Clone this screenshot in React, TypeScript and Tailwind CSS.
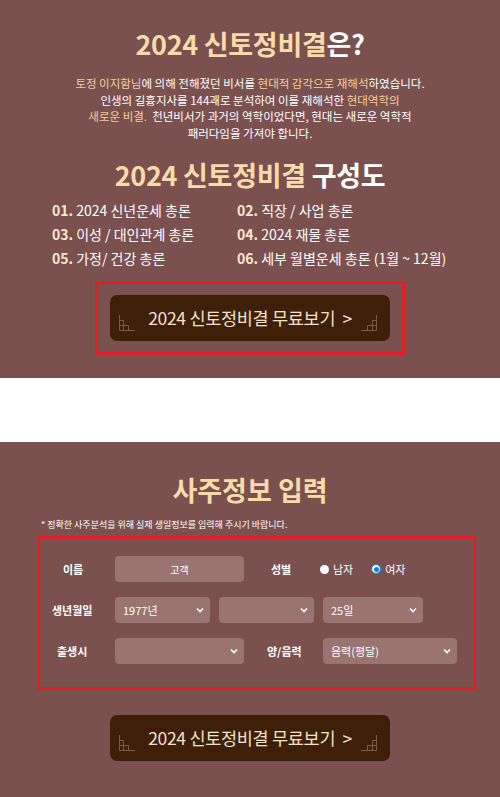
const font = { fontFamily: '"Noto Sans CJK KR", "Noto Sans", sans-serif' };

function Stairs({ flip }: { flip?: boolean }) {
  // small staircase grid in the button corners
  return (
    <svg
      width="18"
      height="17"
      viewBox="0 0 18 17"
      className={flip ? '-scale-x-100' : ''}
      fill="none"
      stroke="#7a5a44"
      strokeWidth="1"
    >
      <path d="M1.5 1v15.5H17" />
      <path d="M1.5 6.5h4v10M1.5 11.5h9v5M5.5 6.5v5M10.5 11.5v5" />
    </svg>
  );
}

function FreeButton() {
  return (
    <button
      className="relative flex h-[46px] w-[280px] items-center justify-center rounded-[7px] bg-[#3e1f08] text-[17.5px] tracking-[-0.3px] text-[#f3e2c8]"
      style={font}
    >
      <span className="absolute bottom-[10px] left-[8px]">
        <Stairs />
      </span>
      <span>2024 신토정비결 무료보기&nbsp; &gt;</span>
      <span className="absolute bottom-[10px] right-[12px]">
        <Stairs flip />
      </span>
    </button>
  );
}

const items = [
  ['01.', '2024 신년운세 총론'],
  ['02.', '직장 / 사업 총론'],
  ['03.', '이성 / 대인관계 총론'],
  ['04.', '2024 재물 총론'],
  ['05.', '가정/ 건강 총론'],
  ['06.', '세부 월별운세 총론 (1월 ~ 12월)'],
];

function Select({ value, className }: { value?: string; className: string }) {
  return (
    <div
      className={`flex h-[26px] items-center justify-between rounded-[4px] bg-[#997471] pl-[8px] pr-[6px] text-[11px] font-normal text-white ${className}`}
    >
      <span>{value ?? ''}</span>
      <svg width="8" height="6" viewBox="0 0 8 6" fill="none" stroke="white" strokeWidth="1.6">
        <path d="M1 1.5l3 3 3-3" />
      </svg>
    </div>
  );
}

export default function App() {
  return (
    <div className="w-[500px] bg-white" style={font}>
      <section className="flex h-[378px] flex-col items-center bg-[#7a514f] pt-[27px]">
        <h1 className="text-[27px] font-bold leading-[34px] tracking-[-0.3px] text-[#f8dba9]">
          2024 신토정비결<span className="text-white">은?</span>
        </h1>
        <p className="mt-[14px] text-center text-[11.5px] leading-[16.5px] text-white">
          <span className="text-[#f4cf98]">토정 이지함님</span>에 의해 전해졌던 비서를{' '}
          <span className="text-[#f4cf98]">현대적 감각으로 재해석</span>하였습니다.
          <br />
          인생의 길흉지사를 144괘로 분석하여 이를 재해석한{' '}
          <span className="text-[#f4cf98]">현대역학의</span>
          <br />
          <span className="text-[#f4cf98]">새로운 비결.</span>&nbsp; 천년비서가 과거의 역학이었다면, 현대는 새로운 역학적
          <br />
          패러다임을 가져야 합니다.
        </p>
        <h2 className="mt-[17px] text-[27px] font-bold leading-[34px] tracking-[-0.3px] text-[#f8dba9]">
          2024 신토정비결 <span className="text-white">구성도</span>
        </h2>
        <div className="mt-[8px] grid w-[400px] grid-cols-[185px_1fr] gap-y-[4px] pl-[2px] text-[14px] leading-[20px] text-white">
          {items.map(([n, t]) => (
            <div key={n}>
              <span className="font-bold text-[#fbe8cc]">{n}</span> {t}
            </div>
          ))}
        </div>
        <div className="mt-[13px] flex h-[74px] w-[310px] items-center justify-center border-[3px] border-[#e41e26]">
          <FreeButton />
        </div>
      </section>

      <div className="h-[64px]" />

      <section className="flex h-[355px] flex-col items-center bg-[#7a514f] pt-[31px]">
        <h2 className="text-[27px] font-bold leading-[34px] text-[#f8dba9]">사주정보 입력</h2>
        <p className="mt-[12px] w-full pl-[41px] text-[9px] leading-[12px] text-white">
          * 정확한 사주분석을 위해 실제 생일정보를 입력해 주시기 바랍니다.
        </p>
        <div className="mt-[5px] ml-[37px] h-[154px] w-[439px] self-start border-[3px] border-[#e41e26] pt-[17px] text-[11px] font-bold text-white">
          <div className="flex h-[26px] items-center">
            <span className="w-[75px] pl-[23px]">이름</span>
            <div className="flex h-[26px] w-[129px] items-center justify-center rounded-[4px] bg-[#997471] text-[10px] font-normal">
              고객
            </div>
            <span className="ml-[27px] w-[49px]">성별</span>
            <label className="flex items-center gap-[4px] font-normal">
              <span className="h-[9px] w-[9px] rounded-full bg-white" />
              남자
            </label>
            <label className="ml-[18px] flex items-center gap-[4px] font-normal">
              <span className="flex h-[10px] w-[10px] items-center justify-center rounded-full border-[1.5px] border-[#1a73e8] bg-white">
                <span className="h-[5px] w-[5px] rounded-full bg-[#1a73e8]" />
              </span>
              여자
            </label>
          </div>
          <div className="mt-[15px] flex h-[26px] items-center">
            <span className="w-[75px] pl-[12px]">생년월일</span>
            <Select value="1977년" className="w-[95px]" />
            <Select className="ml-[9px] w-[95px]" />
            <Select value="25일" className="ml-[9px] w-[100px]" />
          </div>
          <div className="mt-[15px] flex h-[26px] items-center">
            <span className="w-[75px] pl-[17px]">출생시</span>
            <Select className="w-[129px]" />
            <span className="ml-[23px] w-[56px]">양/음력</span>
            <Select value="음력(평달)" className="w-[134px]" />
          </div>
        </div>
        <div className="mt-[25px]">
          <FreeButton />
        </div>
      </section>
    </div>
  );
}
